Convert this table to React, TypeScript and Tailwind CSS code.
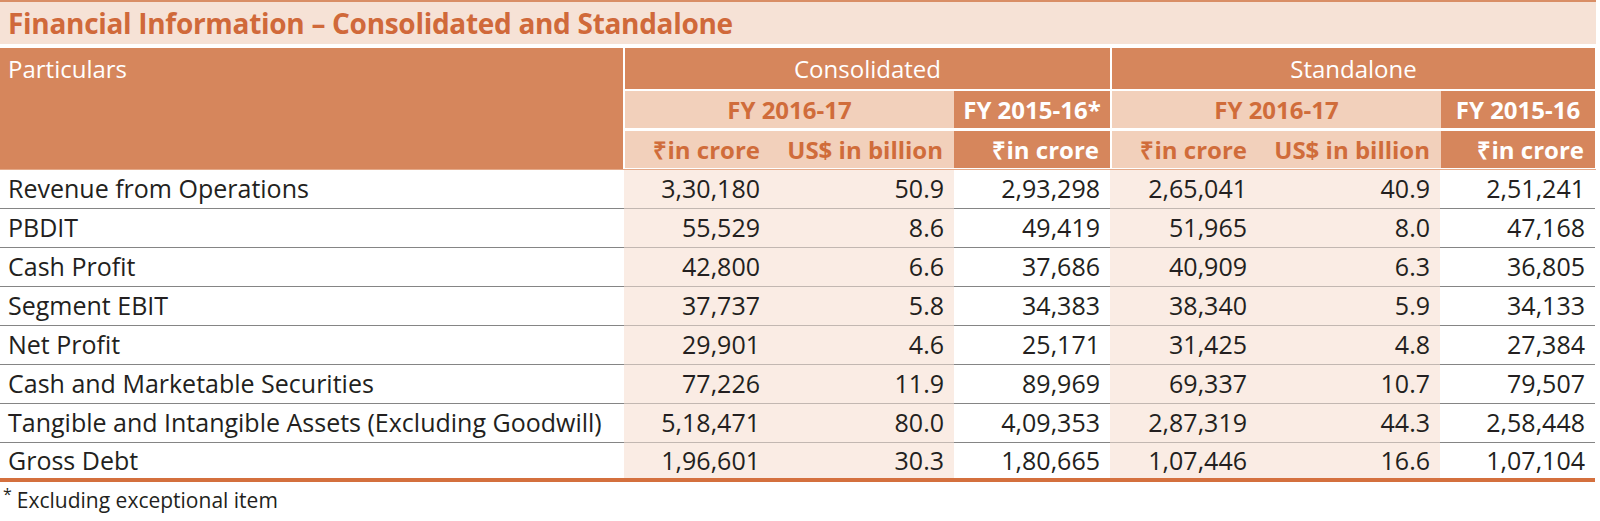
const rows = [
  ["Revenue from Operations", "3,30,180", "50.9", "2,93,298", "2,65,041", "40.9", "2,51,241"],
  ["PBDIT", "55,529", "8.6", "49,419", "51,965", "8.0", "47,168"],
  ["Cash Profit", "42,800", "6.6", "37,686", "40,909", "6.3", "36,805"],
  ["Segment EBIT", "37,737", "5.8", "34,383", "38,340", "5.9", "34,133"],
  ["Net Profit", "29,901", "4.6", "25,171", "31,425", "4.8", "27,384"],
  ["Cash and Marketable Securities", "77,226", "11.9", "89,969", "69,337", "10.7", "79,507"],
  ["Tangible and Intangible Assets (Excluding Goodwill)", "5,18,471", "80.0", "4,09,353", "2,87,319", "44.3", "2,58,448"],
  ["Gross Debt", "1,96,601", "30.3", "1,80,665", "1,07,446", "16.6", "1,07,104"],
]

function GroupHeader({ title, mark }: { title: string; mark?: string }) {
  return (
    <div className="flex flex-col gap-[2px]">
      <div className="h-[41px] bg-[#d6865c] flex items-center justify-center text-white text-[24px]">{title}</div>
      <div className="flex">
        <div className="w-[329px] flex flex-col gap-[3px] bg-white">
          <div className="h-[37px] bg-[#f2d0bb] flex items-center justify-center font-bold text-[#d06c3a] text-[24px]">FY 2016-17</div>
          <div className="h-[37px] bg-[#f2d0bb] flex items-center font-bold text-[#d06c3a] text-[24px]">
            <span className="w-[145px] text-right pr-[10px]">₹in crore</span>
            <span className="w-[184px] text-right pr-[11px]">US$ in billion</span>
          </div>
        </div>
        <div className="flex-1 flex flex-col gap-[3px] bg-white">
          <div className="h-[37px] bg-[#d6865c] flex items-center justify-center font-bold text-white text-[24px]">FY 2015-16{mark}</div>
          <div className="h-[37px] bg-[#d6865c] flex items-center justify-end pr-[11px] font-bold text-white text-[24px]">₹in crore</div>
        </div>
      </div>
    </div>
  )
}

export default function App() {
  const widths = ["w-[146px]", "w-[184px]", "w-[156px]", "w-[147px]", "w-[183px]", "w-[155px]"]
  const tinted = [true, true, false, true, true, false]
  return (
    <div className="w-[1600px] h-[521px] bg-white font-['Open_Sans',sans-serif] text-[#231f20]">
      <div className="w-[1596px]">
        <div className="h-[44px] border-t-2 border-[#d98e66] bg-[#f6e2d6] flex items-center pl-[8px]">
          <h2 className="text-[28px] font-bold text-[#d0693a] tracking-[-0.3px] leading-none">Financial Information – Consolidated and Standalone</h2>
        </div>
        <div className="mt-[4px] flex gap-[2px]">
          <div className="w-[623px] h-[121px] bg-[#d6865c] text-white text-[24px] pl-[8px] pt-[3px]">Particulars</div>
          <div className="w-[485px]"><GroupHeader title="Consolidated" mark="*" /></div>
          <div className="w-[483px]"><GroupHeader title="Standalone" /></div>
        </div>
        <div className="h-[1px] bg-[#e4aa8a]" />
        {rows.map((r, i) => {
          const last = i === rows.length - 1
          return (
            <div key={r[0]} className="flex h-[39px] text-[25px]">
              <div className={`w-[624px] pl-[8px] flex items-center ${last ? "border-b-4 border-[#d4703e]" : "border-b border-[#858585]"}`}>{r[0]}</div>
              {r.slice(1).map((v, j) => (
                <div
                  key={j}
                  className={`${widths[j]} flex items-center justify-end pr-[10px] ${tinted[j] ? "bg-[#faece4]" : "bg-white"} ${
                    last ? "border-b-4 border-[#d4703e]" : tinted[j] ? "border-b border-[#c2b7b1]" : "border-b border-[#858585]"
                  }`}
                >
                  {v}
                </div>
              ))}
            </div>
          )
        })}
        <p className="mt-[3px] pl-[3px] text-[21px]">
          <sup className="text-[16px] mr-[5px]">*</sup>Excluding exceptional item
        </p>
      </div>
    </div>
  )
}
